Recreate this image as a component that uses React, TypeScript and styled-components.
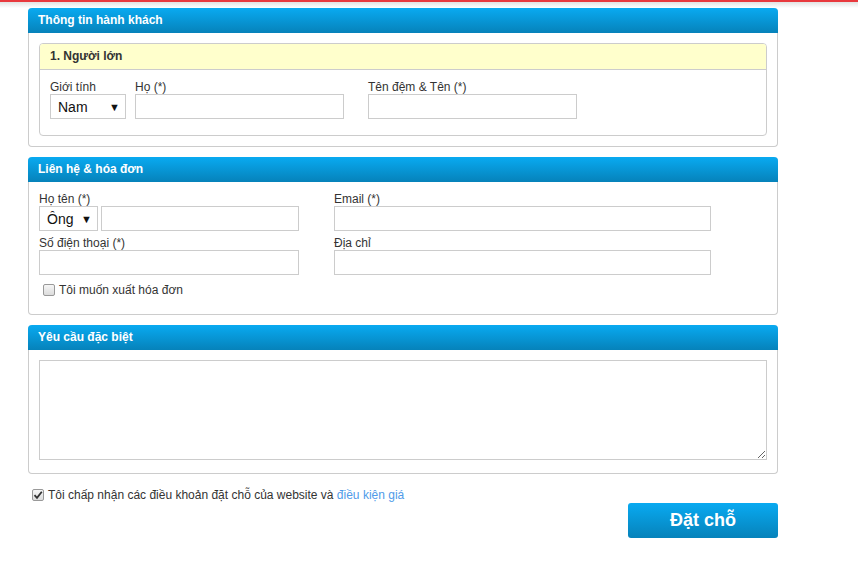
import React, { useState } from 'react'
import styled, { createGlobalStyle } from 'styled-components'

const GlobalStyle = createGlobalStyle`
  html, body { margin: 0; padding: 0; background: #fff; }
  body { font-family: "Liberation Sans", Arial, sans-serif; font-size: 12px; color: #333; }
  * { box-sizing: border-box; }
`

const TopLine = styled.div`
  height: 8px;
  border-top: 2px solid #e8383d;
  background: linear-gradient(#e2e2e2, #fff);
`

const Page = styled.div`
  width: 750px;
  margin-left: 28px;
  display: flex;
  flex-direction: column;
  gap: 10px;
`

const Panel = styled.div`
  border: 1px solid #ccc;
  border-top: none;
  border-radius: 4px;
`

const PanelHead = styled.div`
  height: 25px;
  margin: 0 -1px;
  padding: 0 10px 1px;
  display: flex;
  align-items: center;
  border-radius: 4px 4px 0 0;
  background: linear-gradient(#09aaf1, #0682ba);
  color: #fff;
  font-weight: bold;
  font-size: 12px;
`

const PanelBody = styled.div<{ pad?: string }>`
  padding: ${(p) => p.pad || '10px'};
`

const SubBox = styled.div`
  border: 1px solid #ccc;
  border-radius: 4px;
  overflow: hidden;
`

const SubHead = styled.div`
  height: 26px;
  background: #ffffcc;
  border-bottom: 1px solid #ccc;
  padding: 0 10px 1px;
  display: flex;
  align-items: center;
  font-weight: bold;
  color: #333;
`

const SubBody = styled.div`
  padding: 10px 10px 16px;
  display: flex;
  gap: 9px;
`

const Field = styled.div<{ ml?: number }>`
  display: flex;
  flex-direction: column;
  margin-left: ${(p) => p.ml || 0}px;
`

const Label = styled.label`
  font-size: 12px;
  line-height: 14px;
  color: #333;
  height: 14px;
`

const Input = styled.input<{ w: number }>`
  width: ${(p) => p.w}px;
  height: 25px;
  border: 1px solid #ccc;
  padding: 2px 6px;
  font-family: inherit;
  font-size: 14px;
  outline: none;
`

const SelectBox = styled.div<{ w: number }>`
  width: ${(p) => p.w}px;
  height: 25px;
  border: 1px solid #ccc;
  display: flex;
  align-items: center;
  justify-content: space-between;
  padding: 0 5px 0 7px;
  font-size: 14px;
  color: #111;
  background: #fff;
`

const Caret = styled.span`
  font-size: 11px;
  color: #111;
`

const Grid = styled.div`
  display: grid;
  grid-template-columns: 295px 377px;
  row-gap: 5px;
`

const Row = styled.div`
  display: flex;
  gap: 3px;
`

const CheckRow = styled.label<{ ml?: number; mt?: number }>`
  display: flex;
  align-items: center;
  gap: 4px;
  margin-left: ${(p) => p.ml || 0}px;
  margin-top: ${(p) => p.mt || 0}px;
  font-size: 12px;
  color: #333;
`

const Box = styled.span`
  width: 12px;
  height: 12px;
  border: 1px solid #999;
  border-radius: 2px;
  background: linear-gradient(#f6f6f6, #dcdcdc);
  display: inline-flex;
  align-items: center;
  justify-content: center;
`

const Link = styled.a`
  color: #4f9be9;
  text-decoration: none;
`

const TextArea = styled.textarea`
  display: block;
  width: 728px;
  height: 100px;
  border: 1px solid #ccc;
  resize: both;
  outline: none;
  font-family: inherit;
`

const Footer = styled.div`
  display: flex;
  flex-direction: column;
  padding-top: 4px;
`

const Submit = styled.button`
  align-self: flex-end;
  margin-top: 1px;
  width: 150px;
  height: 35px;
  border: none;
  border-radius: 3px;
  background: linear-gradient(#09aaf1, #0682ba);
  color: #fff;
  font-family: inherit;
  font-weight: bold;
  font-size: 18px;
  cursor: pointer;
`

const Check = () => (
  <svg width="10" height="10" viewBox="0 0 10 10">
    <path d="M1.5 5.2 L4 7.8 L8.8 1.8" stroke="#333" strokeWidth="1.8" fill="none" />
  </svg>
)

const App = () => {
  const [invoice, setInvoice] = useState(false)
  const [accept, setAccept] = useState(true)
  return (
    <>
      <GlobalStyle />
      <TopLine />
      <Page>
        <Panel>
          <PanelHead>Thông tin hành khách</PanelHead>
          <PanelBody>
            <SubBox>
              <SubHead>1. Người lớn</SubHead>
              <SubBody>
                <Field>
                  <Label>Giới tính</Label>
                  <SelectBox w={76}>
                    Nam <Caret>▼</Caret>
                  </SelectBox>
                </Field>
                <Field>
                  <Label>Họ (*)</Label>
                  <Input w={209} />
                </Field>
                <Field ml={15}>
                  <Label>Tên đệm &amp; Tên (*)</Label>
                  <Input w={209} />
                </Field>
              </SubBody>
            </SubBox>
          </PanelBody>
        </Panel>

        <Panel>
          <PanelHead>Liên hệ &amp; hóa đơn</PanelHead>
          <PanelBody pad="10px 10px 17px">
            <Grid>
              <Field>
                <Label>Họ tên (*)</Label>
                <Row>
                  <SelectBox w={59}>
                    Ông <Caret>▼</Caret>
                  </SelectBox>
                  <Input w={198} />
                </Row>
              </Field>
              <Field>
                <Label>Email (*)</Label>
                <Input w={377} />
              </Field>
              <Field>
                <Label>Số điện thoại (*)</Label>
                <Input w={260} />
              </Field>
              <Field>
                <Label>Địa chỉ</Label>
                <Input w={377} />
              </Field>
            </Grid>
            <CheckRow ml={4} mt={8} onClick={() => setInvoice(!invoice)}>
              <Box>{invoice && <Check />}</Box>
              Tôi muốn xuất hóa đơn
            </CheckRow>
          </PanelBody>
        </Panel>

        <Panel>
          <PanelHead>Yêu cầu đặc biệt</PanelHead>
          <PanelBody pad="10px 10px 13px">
            <TextArea />
          </PanelBody>
        </Panel>

        <Footer>
          <CheckRow ml={4} onClick={() => setAccept(!accept)}>
            <Box>{accept && <Check />}</Box>
            <span>
              Tôi chấp nhận các điều khoản đặt chỗ của website và <Link href="#">điều kiện giá</Link>
            </span>
          </CheckRow>
          <Submit>Đặt chỗ</Submit>
        </Footer>
      </Page>
    </>
  )
}

export default App
